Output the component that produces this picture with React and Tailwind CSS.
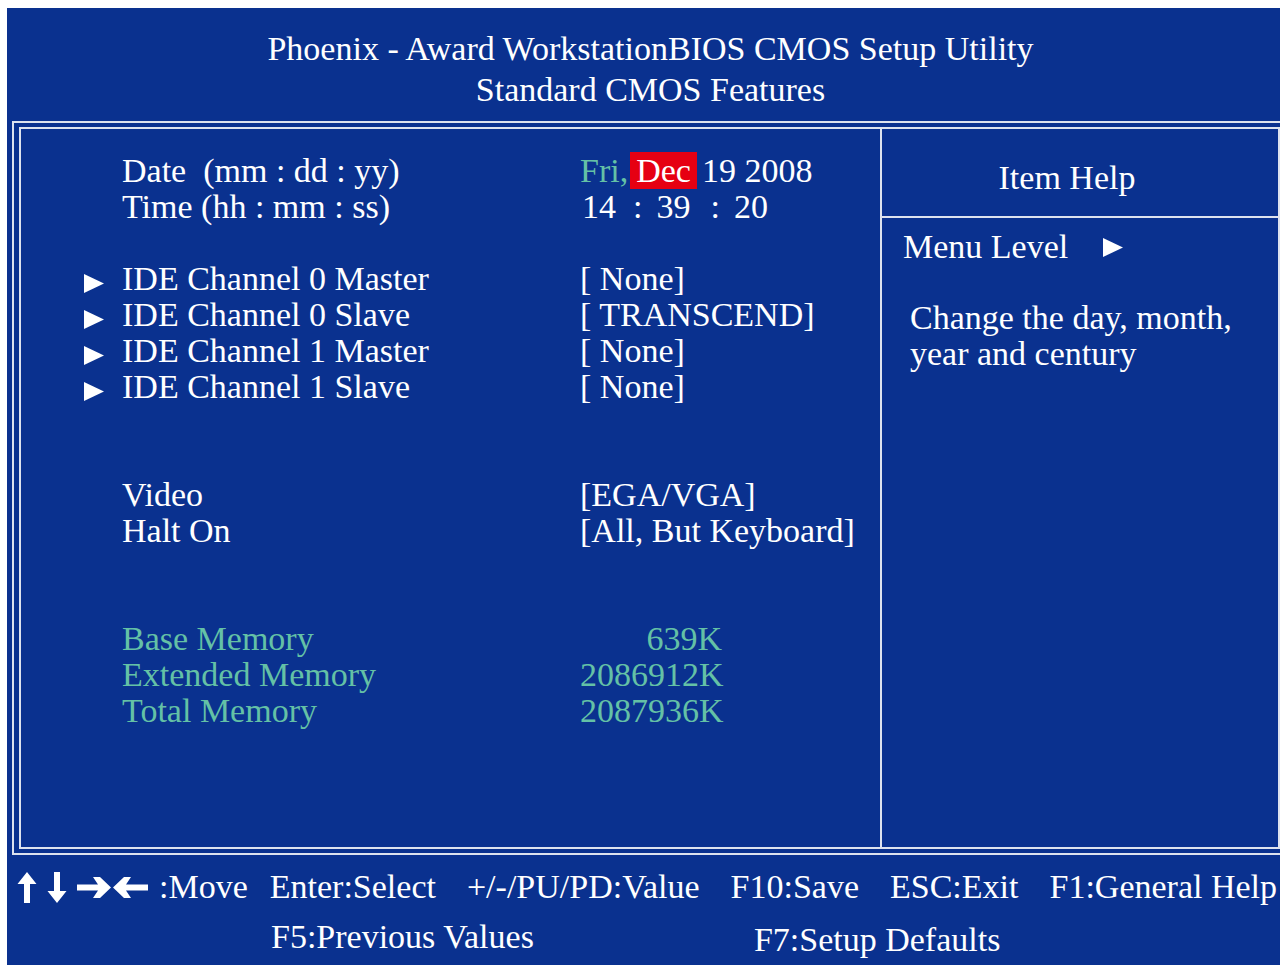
import React from 'react';

const Tri = ({ className = '' }) => (
  <svg width="20" height="19" viewBox="0 0 20 19" className={className}>
    <polygon points="0,0 20,9.5 0,19" fill="#fff" />
  </svg>
);

const MoveArrows = () => (
  <div className="flex items-center">
    <svg width="20" height="31" viewBox="0 0 20 31">
      <polygon points="10,0 19.5,12 13,12 13,31 7,31 7,12 0.5,12" fill="#fff" />
    </svg>
    <svg width="20" height="31" viewBox="0 0 20 31" className="ml-[10px]">
      <polygon points="10,31 19.5,19 13,19 13,0 7,0 7,19 0.5,19" fill="#fff" />
    </svg>
    <svg width="34" height="21" viewBox="0 0 34 21" className="ml-[10px]">
      <polygon points="0,7.5 21,7.5 16,0 23,0 34,10.5 23,21 16,21 21,13.5 0,13.5" fill="#fff" />
    </svg>
    <svg width="35" height="21" viewBox="0 0 35 21" className="ml-[2px]">
      <polygon points="35,7.5 13,7.5 18,0 11,0 0,10.5 11,21 18,21 13,13.5 35,13.5" fill="#fff" />
    </svg>
  </div>
);

const Row = ({ arrow, label, children, dim }) => (
  <div className="flex h-[36px] items-center">
    <div className="w-[101px] pl-[63px] pt-[8px]">{arrow && <Tri />}</div>
    <div className={`w-[458px] whitespace-pre ${dim ? 'text-[#64c1a6]' : ''}`}>{label}</div>
    <div className="whitespace-pre">{children}</div>
  </div>
);

const App = () => {
  return (
    <div className="min-h-screen bg-white pl-[7px] pt-[8px] font-['Liberation_Serif','Times_New_Roman',serif]">
      <div className="h-[957px] overflow-hidden bg-[#0a318f] text-white">
        {/* title */}
        <header className="h-[113px] pl-[14px] pt-[20px] text-center text-[34px] leading-[41px]">
          <div>Phoenix - Award WorkstationBIOS CMOS Setup Utility</div>
          <div>Standard CMOS Features</div>
        </header>

        {/* double frame */}
        <div className="ml-[5px] w-[1300px] border-2 border-[#dde2ee] px-[5px] py-[4px]">
          <div className="flex h-[722px] w-[1261px] border-2 border-[#dde2ee] text-[34px] leading-[36px]">
            <div className="w-[861px] border-r-2 border-[#dde2ee] pt-[24px]">
              <Row label="Date  (mm : dd : yy)">
                <span className="text-[#64c1a6]">Fri,</span>
                <span className="ml-[2px] bg-[#e60012] px-[6px]">Dec</span>
                <span className="ml-[5px]">19 2008</span>
              </Row>
              <Row label="Time (hh : mm : ss)">
                <span className="ml-[2px]">14</span>
                <span className="ml-[17px]">:</span>
                <span className="ml-[14px]">39</span>
                <span className="ml-[20px]">:</span>
                <span className="ml-[14px]">20</span>
              </Row>
              <div className="h-[36px]" />
              <Row arrow label="IDE Channel 0 Master">[ None]</Row>
              <Row arrow label="IDE Channel 0 Slave">[ TRANSCEND]</Row>
              <Row arrow label="IDE Channel 1 Master">[ None]</Row>
              <Row arrow label="IDE Channel 1 Slave">[ None]</Row>
              <div className="h-[72px]" />
              <Row label="Video">[EGA/VGA]</Row>
              <Row label="Halt On">[All, But Keyboard]</Row>
              <div className="h-[72px]" />
              <Row dim label="Base Memory">
                <div className="w-[142px] text-right text-[#64c1a6]">639K</div>
              </Row>
              <Row dim label="Extended Memory">
                <div className="w-[142px] text-right text-[#64c1a6]">2086912K</div>
              </Row>
              <Row dim label="Total Memory">
                <div className="w-[142px] text-right text-[#64c1a6]">2087936K</div>
              </Row>
            </div>

            {/* help panel */}
            <div className="flex-1">
              <div className="flex h-[89px] items-center justify-center border-b-2 border-[#dde2ee] pr-[26px] pt-[10px]">
                Item Help
              </div>
              <div className="mt-[11px] flex items-center pl-[21px]">
                <span>Menu Level</span>
                <Tri className="ml-[35px]" />
              </div>
              <div className="mt-[35px] pl-[28px]">
                <div>Change the day, month,</div>
                <div>year and century</div>
              </div>
            </div>
          </div>
        </div>

        {/* key help */}
        <footer className="text-[34px] leading-[36px]">
          <div className="mt-[14px] flex items-center pl-[10px]">
            <MoveArrows />
            <span className="ml-[11px]">:Move</span>
            <span className="ml-[22px]">Enter:Select</span>
            <span className="ml-[31px]">+/-/PU/PD:Value</span>
            <span className="ml-[31px]">F10:Save</span>
            <span className="ml-[31px]">ESC:Exit</span>
            <span className="ml-[31px]">F1:General Help</span>
          </div>
          <div className="mt-[14px] flex pl-[264px]">
            <span>F5:Previous Values</span>
            <span className="ml-[220px] pt-[3px]">F7:Setup Defaults</span>
          </div>
        </footer>
      </div>
    </div>
  );
};

export default App;
